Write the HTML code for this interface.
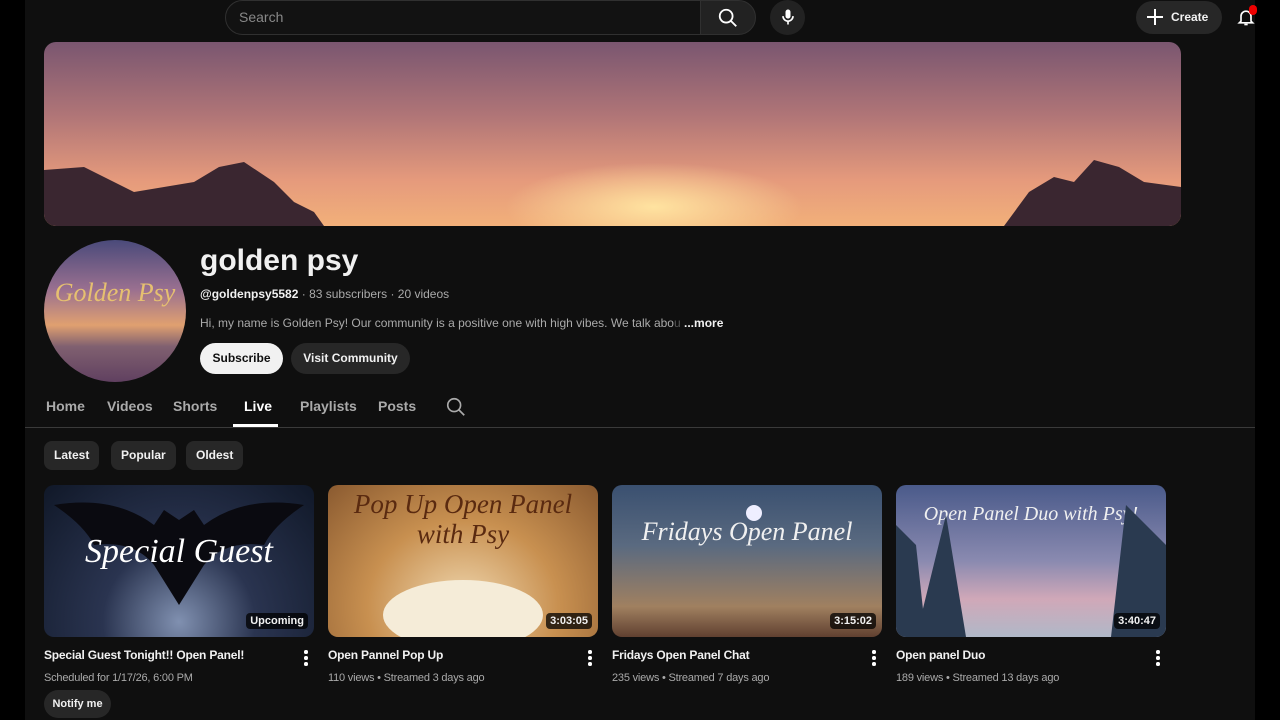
<!DOCTYPE html>
<html><head><style>
*{margin:0;padding:0;box-sizing:border-box}
body{width:1280px;height:720px;background:#000;font-family:"Liberation Sans",Arial,sans-serif;color:#f1f1f1;position:relative;overflow:hidden}
#main{position:absolute;left:25px;top:0;width:1230px;height:720px;background:#0f0f0f}
.a{position:absolute}
.chip{position:absolute;top:441px;height:29px;background:#272727;border-radius:8px;font-size:12px;font-weight:bold;line-height:29px;padding:0 10px}
.th{position:absolute;top:485px;width:270px;height:152px;border-radius:10px;overflow:hidden}
.dur{position:absolute;right:6px;bottom:8px;background:rgba(0,0,0,.75);font-size:11px;font-weight:bold;padding:2px 4px;border-radius:4px}
.tt{position:absolute;top:648px;font-size:12px;font-weight:bold;letter-spacing:-0.2px}
.mt{position:absolute;top:672px;font-size:11px;color:#aaa;letter-spacing:-0.2px}
.dots{position:absolute;top:650px;width:4px}
.dots i{display:block;width:3.5px;height:3.5px;background:#fff;border-radius:50%;margin-bottom:2.5px}
.tab{position:absolute;top:398px;font-size:14px;color:#aaa;font-weight:bold}
.scr{position:absolute;font-family:"Liberation Serif",serif;font-style:italic;text-align:center;width:100%}
</style></head><body>
<div id="main">
<div class="a" style="left:200px;top:0;width:476px;height:35px;border:1px solid #303030;border-radius:18px 0 0 18px;background:#121212"></div>
<div class="a" style="left:214px;top:9px;font-size:14px;color:#888">Search</div>
<div class="a" style="left:675px;top:0;width:56px;height:35px;background:#222;border:1px solid #303030;border-radius:0 18px 18px 0"></div>
<svg class="a" style="left:692px;top:7px" width="22" height="22" viewBox="0 0 24 24" fill="none" stroke="#fff" stroke-width="2"><circle cx="10" cy="10" r="7"/><path d="M15 15l6 6"/></svg>
<div class="a" style="left:745px;top:0;width:35px;height:35px;border-radius:50%;background:#222"></div>
<svg class="a" style="left:753px;top:7px" width="20" height="20" viewBox="0 0 24 24" fill="#fff"><rect x="9" y="3" width="6" height="11" rx="3"/><path d="M6 11a6 6 0 0012 0" stroke="#fff" stroke-width="2" fill="none"/><rect x="11" y="17" width="2" height="4"/></svg>
<div class="a" style="left:1111px;top:1px;width:86px;height:33px;border-radius:17px;background:#272727;font-size:12px;font-weight:bold;line-height:33px;padding-left:35px">Create</div>
<svg class="a" style="left:1121px;top:8px" width="18" height="18" viewBox="0 0 18 18" stroke="#fff" stroke-width="2"><path d="M9 1v16M1 9h16"/></svg>
<svg class="a" style="left:1211px;top:7px" width="20" height="20" viewBox="0 0 24 24" fill="none" stroke="#fff" stroke-width="2"><path d="M6 17V11a6 6 0 0112 0v6l2 2H4z"/><path d="M10 21h4"/></svg>
<div class="a" style="left:1224px;top:5px;width:8px;height:10px;border-radius:4px;background:#e00"></div>

<div class="a" style="left:19px;top:42px;width:1137px;height:184px;border-radius:12px;overflow:hidden;background:linear-gradient(180deg,#7a5670 0%,#b07577 40%,#e59a7c 75%,#f2b07a 100%)">
<div class="a" style="left:460px;top:120px;width:300px;height:90px;background:radial-gradient(ellipse,#ffe3a0 0%,rgba(255,200,120,0) 70%)"></div>
<svg class="a" style="left:0;top:0" width="1137" height="184"><path d="M0 128 L40 125 L90 150 L150 140 L175 125 L200 120 L230 140 L250 160 L270 170 L280 184 L0 184Z" fill="#3a2630"/><path d="M960 184 L985 150 L1010 135 L1030 140 L1050 118 L1075 125 L1100 140 L1137 145 L1137 184Z" fill="#3a2630"/></svg>
</div>

<div class="a" style="left:19px;top:240px;width:142px;height:142px;border-radius:50%;overflow:hidden;background:linear-gradient(180deg,#4a4a7a 0%,#9a7090 35%,#e0a070 60%,#806070 75%,#604060 100%)">
<div class="scr" style="top:38px;font-size:26px;color:#e6c070">Golden Psy</div>
</div>
<div class="a" style="left:175px;top:244px;font-size:30px;font-weight:bold">golden psy</div>
<div class="a" style="left:175px;top:287px;font-size:12px;color:#aaa"><b style="color:#f1f1f1">@goldenpsy5582</b> · 83 subscribers · 20 videos</div>
<div class="a" style="left:175px;top:316px;font-size:12px;color:#aaa">Hi, my name is Golden Psy! Our community is a positive one with high vibes. We talk abo<span style="color:#555">u</span> <b style="color:#f1f1f1">...more</b></div>
<div class="a" style="left:175px;top:343px;width:83px;height:31px;border-radius:16px;background:#f1f1f1;color:#0f0f0f;font-size:12px;font-weight:bold;line-height:31px;text-align:center">Subscribe</div>
<div class="a" style="left:266px;top:343px;width:119px;height:31px;border-radius:16px;background:#272727;font-size:12px;font-weight:bold;line-height:31px;text-align:center">Visit Community</div>

<div class="tab" style="left:21px">Home</div>
<div class="tab" style="left:82px">Videos</div>
<div class="tab" style="left:148px">Shorts</div>
<div class="tab" style="left:219px;color:#fff">Live</div>
<div class="a" style="left:208px;top:424px;width:45px;height:3px;background:#fff"></div>
<div class="tab" style="left:275px">Playlists</div>
<div class="tab" style="left:353px">Posts</div>
<svg class="a" style="left:420px;top:396px" width="22" height="22" viewBox="0 0 24 24" fill="none" stroke="#aaa" stroke-width="1.8"><circle cx="10" cy="10" r="7"/><path d="M15 15l6 6"/></svg>
<div class="a" style="left:0;top:427px;width:1230px;height:1px;background:#3a3a3a"></div>

<div class="chip" style="left:19px">Latest</div>
<div class="chip" style="left:86px">Popular</div>
<div class="chip" style="left:161px">Oldest</div>

<div class="th" style="left:19px;background:radial-gradient(ellipse at 50% 90%,#8090b0 0%,#2a3450 40%,#101828 100%)">
<svg class="a" width="270" height="152"><path d="M10 20 Q70 10 110 40 L120 25 L135 35 L150 25 L160 40 Q200 10 260 20 Q230 40 220 60 Q180 55 160 80 L135 120 L110 80 Q90 55 50 60 Q40 40 10 20Z" fill="#0a0a10"/></svg>
<div class="scr" style="top:48px;font-size:34px;color:#fff">Special Guest</div>
<div class="dur">Upcoming</div></div>
<div class="th" style="left:303px;background:radial-gradient(ellipse at 50% 80%,#f0d8b0 0%,#c89050 50%,#8a5a30 100%)">
<div class="a" style="left:55px;top:95px;width:160px;height:70px;border-radius:50%;background:#f5ecd8"></div>
<div class="scr" style="top:4px;font-size:27px;line-height:30px;color:#5a2a10">Pop Up Open Panel<br>with Psy</div>
<div class="dur">3:03:05</div></div>
<div class="th" style="left:587px;background:linear-gradient(180deg,#3a5070 0%,#5a6a80 40%,#a08060 80%,#604030 100%)">
<div class="a" style="left:134px;top:20px;width:16px;height:16px;border-radius:50%;background:#eef"></div>
<div class="scr" style="top:32px;font-size:26px;color:#f0f0f0">Fridays Open Panel</div>
<div class="dur">3:15:02</div></div>
<div class="th" style="left:871px;background:linear-gradient(180deg,#4a5a8a 0%,#8a8ab0 50%,#d0a8b8 75%,#b0b8c8 100%)">
<div class="scr" style="top:18px;font-size:20px;color:#f0f0f0">Open Panel Duo with Psy!</div>
<svg class="a" width="270" height="152"><path d="M0 40 L20 60 L30 152 L0 152Z M50 30 L70 152 L20 152Z M230 20 L270 60 L270 152 L215 152Z" fill="#2a3a50"/></svg>
<div class="dur">3:40:47</div></div>

<div class="tt" style="left:19px">Special Guest Tonight!! Open Panel!</div>
<div class="mt" style="left:19px">Scheduled for 1/17/26, 6:00 PM</div>
<div class="a" style="left:19px;top:690px;width:67px;height:28px;border-radius:14px;background:#272727;font-size:11px;font-weight:bold;line-height:28px;text-align:center">Notify me</div>
<div class="tt" style="left:303px">Open Pannel Pop Up</div>
<div class="mt" style="left:303px">110 views • Streamed 3 days ago</div>
<div class="tt" style="left:587px">Fridays Open Panel Chat</div>
<div class="mt" style="left:587px">235 views • Streamed 7 days ago</div>
<div class="tt" style="left:871px">Open panel Duo</div>
<div class="mt" style="left:871px">189 views • Streamed 13 days ago</div>
<div class="dots" style="left:279px"><i></i><i></i><i></i></div>
<div class="dots" style="left:563px"><i></i><i></i><i></i></div>
<div class="dots" style="left:847px"><i></i><i></i><i></i></div>
<div class="dots" style="left:1131px"><i></i><i></i><i></i></div>
</div>
</body></html>
